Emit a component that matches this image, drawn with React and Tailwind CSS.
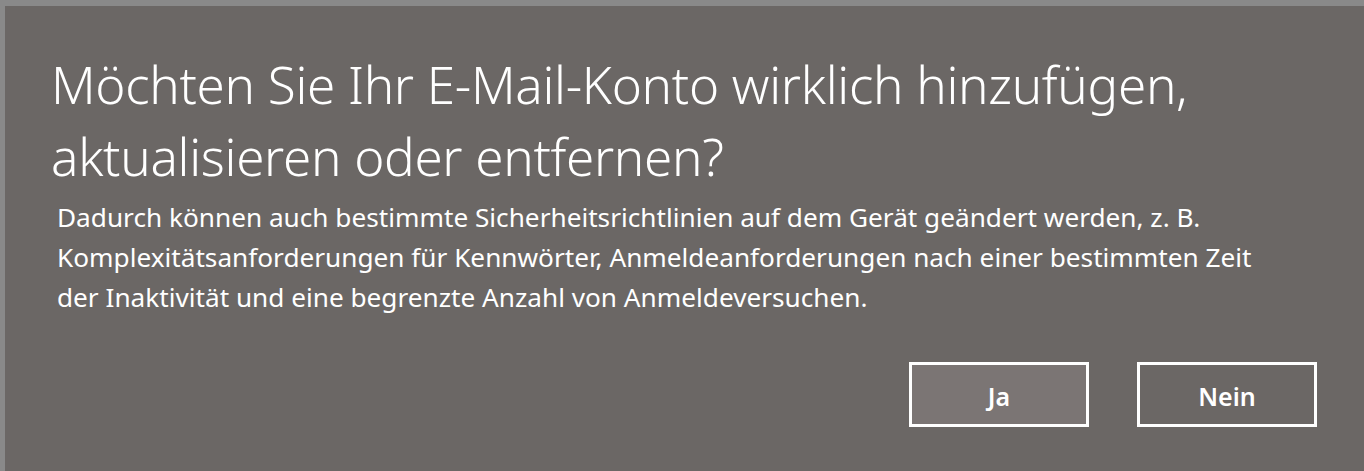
export default function App() {
  return (
    <div
      className="w-[1364px] h-[471px] bg-[#898989] pt-[6px] pl-[5px] flex overflow-hidden"
      style={{ fontFamily: '"Segoe UI", "Noto Sans", "Open Sans", sans-serif' }}
    >
      <div className="flex-1 bg-[#6b6765] text-white flex flex-col">
        <h1 className="pl-[46px] pt-[42px] pr-[80px] text-[51.2px] font-light leading-[72px] tracking-[-0.3px] whitespace-nowrap">
          Möchten Sie Ihr E-Mail-Konto wirklich hinzufügen,
          <br />
          aktualisieren oder entfernen?
        </h1>
        <p className="pl-[52px] pr-[40px] mt-[5px] text-[26.2px] leading-[40px] whitespace-nowrap">
          Dadurch können auch bestimmte Sicherheitsrichtlinien auf dem Gerät geändert werden, z. B.
          <br />
          Komplexitätsanforderungen für Kennwörter, Anmeldeanforderungen nach einer bestimmten Zeit
          <br />
          der Inaktivität und eine begrenzte Anzahl von Anmeldeversuchen.
        </p>
        <div className="flex justify-end gap-[48px] pr-[47px] mt-[45px]">
          <button className="w-[180px] h-[65px] pt-[4px] border-[3px] border-white bg-[#7b7574] text-[25px] font-semibold">
            Ja
          </button>
          <button className="w-[180px] h-[65px] pt-[4px] border-[3px] border-white text-[25px] font-semibold">
            Nein
          </button>
        </div>
      </div>
    </div>
  );
}
